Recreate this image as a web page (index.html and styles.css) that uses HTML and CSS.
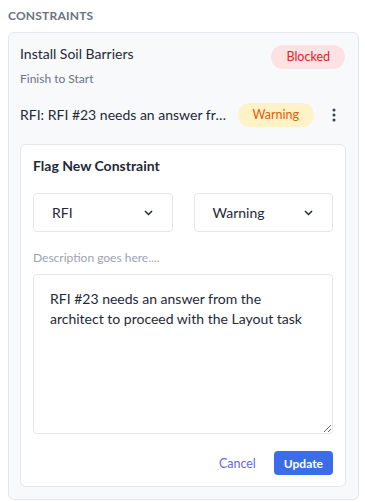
FILE: index.html
```html
<!DOCTYPE html>
<html lang="en">
<head>
  <meta charset="UTF-8">
  <title>Constraints</title>
  <link rel="stylesheet" href="styles.css">
</head>
<body>
  <div class="section-title">CONSTRAINTS</div>

  <div class="panel">
    <!-- task row -->
    <div class="task-row">
      <div class="task-name">Install Soil Barriers</div>
      <span class="pill pill-blocked">Blocked</span>
    </div>
    <div class="task-sub">Finish to Start</div>

    <!-- existing constraint -->
    <div class="constraint-row">
      <div class="constraint-text">RFI: RFI #23 needs an answer from the architect to proceed with the Layout task</div>
      <span class="pill pill-warning">Warning</span>
      <span class="kebab">
        <svg width="4" height="14" viewBox="0 0 4 14"><circle cx="2" cy="2" r="1.5" fill="#374151"/><circle cx="2" cy="7" r="1.5" fill="#374151"/><circle cx="2" cy="12" r="1.5" fill="#374151"/></svg>
      </span>
    </div>

    <!-- form -->
    <div class="form-card">
      <h3>Flag New Constraint</h3>
      <div class="select-row">
        <div class="select">
          <span>RFI</span>
          <svg width="9" height="6" viewBox="0 0 9 6"><path d="M1 1l3.5 3.5L8 1" fill="none" stroke="#1f2937" stroke-width="1.5"/></svg>
        </div>
        <div class="select">
          <span>Warning</span>
          <svg width="9" height="6" viewBox="0 0 9 6"><path d="M1 1l3.5 3.5L8 1" fill="none" stroke="#1f2937" stroke-width="1.5"/></svg>
        </div>
      </div>
      <div class="field-label">Description goes here....</div>
      <textarea class="desc">RFI #23 needs an answer from the architect to proceed with the Layout task</textarea>
      <div class="actions">
        <button class="btn-link">Cancel</button>
        <button class="btn-primary">Update</button>
      </div>
    </div>
  </div>
</body>
</html>
```

FILE: styles.css
```css
body {
  margin: 0;
  padding: 8px 6px 0 8px;
  font-family: Lato, 'Liberation Sans', sans-serif;
  color: #1f2937;
  background: #fff;
}

.section-title {
  font-size: 12px;
  font-weight: bold;
  color: #6b7280;
  letter-spacing: 0.2px;
  line-height: 16px;
  margin-bottom: 8px;
}

/* outer card */
.panel {
  background: #f8f9fb;
  border: 1px solid #e5e7eb;
  border-radius: 6px;
  padding: 12px 12px 12px 11px;
}

.task-row {
  display: flex;
  justify-content: space-between;
  align-items: flex-start;
  height: 20px;
}

.task-name {
  font-size: 14px;
  line-height: 20px;
  margin-top: -1px;
}

.pill {
  display: inline-block;
  font-size: 12.5px;
  line-height: 24px;
  padding: 0 15px;
  border-radius: 12px;
  white-space: nowrap;
}

.pill-blocked {
  background: #fde2e4;
  color: #dc2626;
  margin-right: 1px;
}

.task-sub {
  font-size: 12px;
  color: #6b7280;
  line-height: 16px;
  margin-top: 6px;
}

.constraint-row {
  display: flex;
  align-items: center;
  margin-top: 16px;
}

.constraint-text {
  flex: 1;
  min-width: 0;
  font-size: 14px;
  line-height: 20px;
  white-space: nowrap;
  overflow: hidden;
  text-overflow: ellipsis;
  margin-right: 10px;
}

.pill-warning {
  background: #fef3c7;
  color: #ea580c;
}

.kebab {
  display: flex;
  margin-left: 18px;
  margin-right: 10px;
}

/* form */
.form-card {
  background: #fff;
  border: 1px solid #e5e7eb;
  border-radius: 6px;
  margin-top: 17px;
  padding: 11px 12px 11px 12px;
}

.form-card h3 {
  margin: 0;
  font-size: 14px;
  font-weight: bold;
  line-height: 20px;
}

.select-row {
  display: grid;
  grid-template-columns: 1fr 1fr;
  gap: 21px;
  margin-top: 17px;
}

.select {
  display: flex;
  justify-content: space-between;
  align-items: center;
  box-sizing: border-box;
  height: 39px;
  border: 1px solid #e5e7eb;
  border-radius: 4px;
  padding: 0 19px 0 18px;
  font-size: 14px;
}

.field-label {
  font-size: 12px;
  color: #9ca3af;
  margin-top: 18px;
  line-height: 16px;
}

.desc {
  display: block;
  box-sizing: border-box;
  width: 100%;
  height: 160px;
  margin-top: 8px;
  border: 1px solid #e5e7eb;
  border-radius: 4px;
  padding: 14px 16px;
  font-family: Lato, 'Liberation Sans', sans-serif;
  font-size: 14px;
  line-height: 20px;
  color: #1f2937;
  resize: vertical;
  outline: none;
}

.actions {
  display: flex;
  justify-content: flex-end;
  align-items: center;
  gap: 18px;
  margin-top: 17px;
}

.btn-link {
  background: none;
  border: none;
  padding: 0;
  font-family: inherit;
  font-size: 12.5px;
  color: #6366f1;
  cursor: pointer;
}

.btn-primary {
  background: #3b6ce9;
  color: #fff;
  border: none;
  border-radius: 4px;
  padding: 0 10px;
  height: 24px;
  font-family: inherit;
  font-size: 12px;
  font-weight: bold;
  cursor: pointer;
}
```
